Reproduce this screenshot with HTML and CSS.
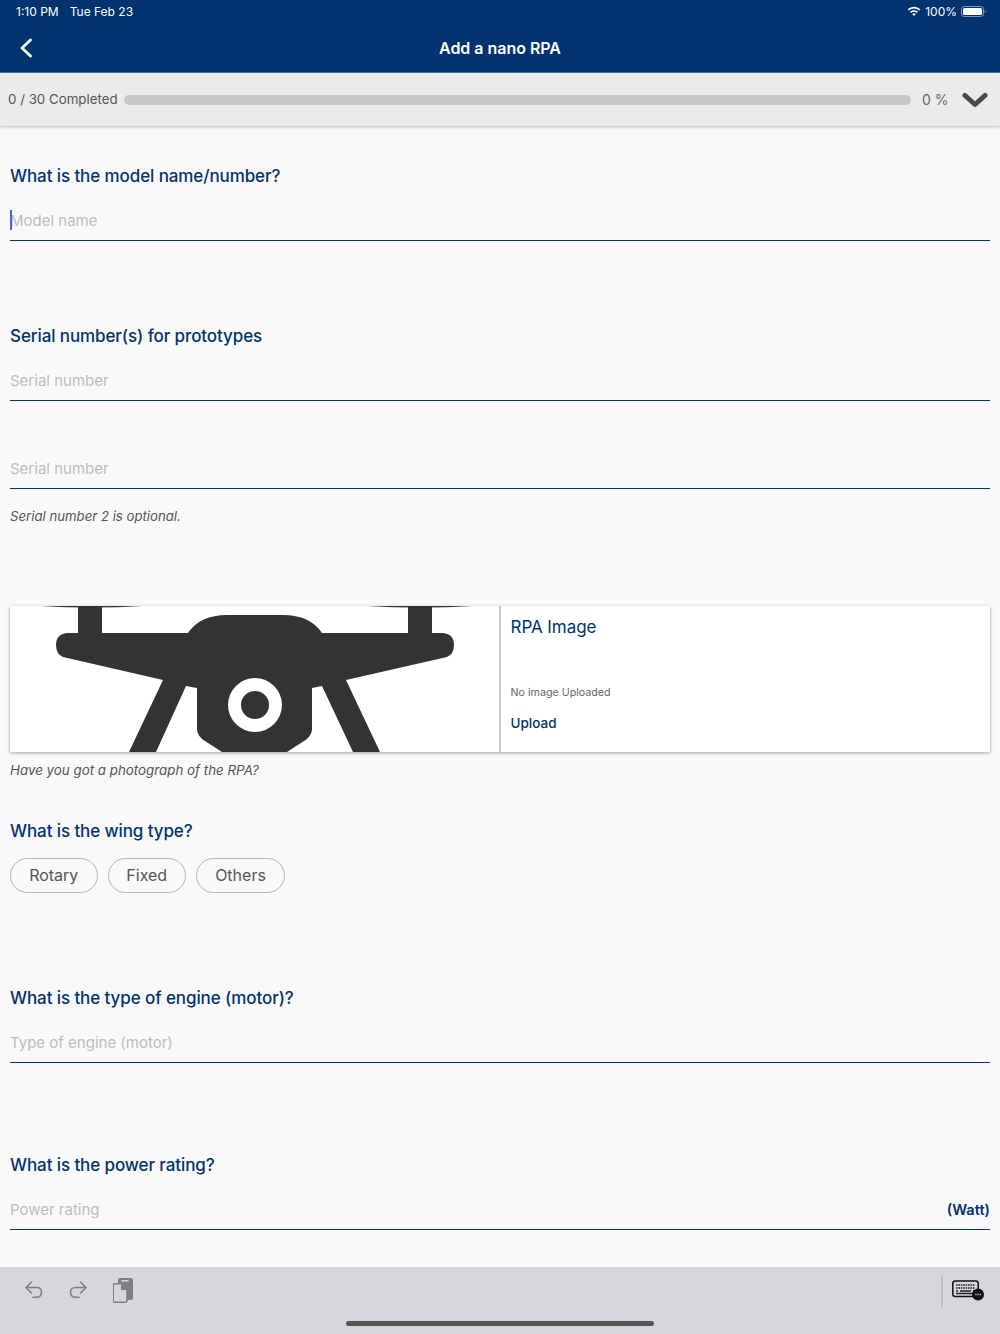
FILE: index.html
```html
<!DOCTYPE html>
<html lang="en">
<head>
<meta charset="utf-8">
<title>Add a nano RPA</title>
<link rel="stylesheet" href="styles.css">
</head>
<body>
<div class="app">
  <header class="header">
    <div class="status">
      <div class="status-left"><span>1:10 PM</span><span>Tue Feb 23</span></div>
      <div class="status-right">
        <svg class="wifi" viewBox="0 0 14 10" width="14" height="10"><path d="M.6 3.4C4.2 0 9.8 0 13.4 3.4l-1.1 1.2C9.3 1.8 4.7 1.8 1.7 4.6z" fill="#fff"/><path d="M2.9 5.7c2.3-2.1 5.900-2.100 8.200 0L10 6.900C8.300 5.400 5.700 5.400 4 6.900z" fill="#fff"/><path d="M5.200 8C6.200 7.100 7.800 7.100 8.800 8L7 9.900z" fill="#fff"/></svg>
        <span>100%</span>
        <svg class="battery" viewBox="0 0 25 11" width="25" height="11"><rect x=".5" y=".5" width="22" height="10" rx="2.800" fill="none" stroke="#7f9cc4"/><rect x="2" y="2" width="19" height="7" rx="1.500" fill="#fff"/><path d="M23.800 4v3c.6-.2 1-.8 1-1.500s-.4-1.300-1-1.500z" fill="#7f9cc4"/></svg>
      </div>
    </div>
    <div class="navbar">
      <svg class="back" viewBox="0 0 14 20" width="14" height="20"><path d="M11.500 2 3 10l8.500 8" fill="none" stroke="#fff" stroke-width="2.800" stroke-linecap="round" stroke-linejoin="round"/></svg>
      <h1 class="nav-title">Add a nano RPA</h1>
    </div>
  </header>

  <div class="progress">
    <span class="progress-label">0 / 30 Completed</span>
    <div class="progress-track"></div>
    <span class="progress-pct">0 %</span>
    <svg class="chevron" viewBox="0 0 26 16" width="26" height="16"><path d="M3 3.500 13 12.500 23 3.500" fill="none" stroke="#4a4a4a" stroke-width="5" stroke-linecap="round" stroke-linejoin="round"/></svg>
  </div>

  <main class="form">
    <h2 class="question q-first">What is the model name/number?</h2>
    <div class="field"><span class="caret"></span><span class="placeholder">Model name</span></div>

    <h2 class="question q-serial">Serial number(s) for prototypes</h2>
    <div class="field"><span class="placeholder">Serial number</span></div>
    <div class="field field-second"><span class="placeholder">Serial number</span></div>
    <p class="hint hint-serial">Serial number 2 is optional.</p>

    <section class="card">
      <div class="card-image">
        <svg class="drone" viewBox="10 606 489 146" width="489" height="146">
          <path d="M40 606H143Q92 609 40 606zM367 606H473Q420 609 367 606z" fill="#333"/>
          <path fill="#333" fill-rule="evenodd" d="M78 606H102V633H188Q200 615 227 615H283Q310 615 322 633H408V606H432V633H443Q454 634 454 645Q454 654 447 657L346 680 380 752H353L322 686 312 688V730Q311 737 304 741L287 752H222L205 741Q198 737 197 730V688L186 686 156 752H129L163 680 63 657Q56 654 56 645Q56 634 67 633H78zM255 678A27 27 0 1 0 255 732 27 27 0 1 0 255 678zM255 691A14 14 0 1 1 255 719 14 14 0 1 1 255 691z"/>
        </svg>
      </div>
      <div class="card-info">
        <h3 class="card-title">RPA Image</h3>
        <p class="card-status">No image Uploaded</p>
        <span class="card-upload">Upload</span>
      </div>
    </section>
    <p class="hint hint-photo">Have you got a photograph of the RPA?</p>

    <h2 class="question q-wing">What is the wing type?</h2>
    <div class="pills">
      <span class="pill pill-rotary">Rotary</span>
      <span class="pill pill-fixed">Fixed</span>
      <span class="pill pill-others">Others</span>
    </div>

    <h2 class="question q-engine">What is the type of engine (motor)?</h2>
    <div class="field"><span class="placeholder">Type of engine (motor)</span></div>

    <h2 class="question q-power">What is the power rating?</h2>
    <div class="field field-unit"><span class="placeholder">Power rating</span><span class="unit">(Watt)</span></div>
  </main>

  <footer class="toolbar">
    <div class="tools">
      <svg class="tool" viewBox="0 0 22 22" width="22" height="22"><path d="M8.500 3 3 8.500 8.500 14M3.500 8.500h10c3 0 5 2 5 4.800s-2 5-5 5H10" fill="none" stroke="#7d7f84" stroke-width="1.600" stroke-linecap="round" stroke-linejoin="round"/></svg>
      <svg class="tool" viewBox="0 0 22 22" width="22" height="22"><path d="M13.500 3 19 8.500 13.500 14M18.500 8.500h-10c-3 0-5 2-5 4.800s2 5 5 5H12" fill="none" stroke="#7d7f84" stroke-width="1.600" stroke-linecap="round" stroke-linejoin="round"/></svg>
      <svg class="tool tool-paste" viewBox="0 0 20 25" width="20" height="25"><path d="M7 0h11c1 0 2 1 2 2v18c0 1-1 2-2 2h-4V11L8 5H5V2c0-1 1-2 2-2z" fill="#7d7f84"/><path d="M9 2.700h6" stroke="#d5d7dc" stroke-width="1.500" stroke-linecap="round"/><path d="M2 5.800h6.500l5.500 5.700v10.700c0 1-.7 2-1.800 2H2c-1 0-1.800-1-1.800-2V7.600C.2 6.600 1 5.800 2 5.800z" fill="#d5d7dc" stroke="#7d7f84" stroke-width="1.500"/><path d="M8 6v6h6z" fill="#7d7f84"/></svg>
    </div>
    <div class="kbd-area">
      <span class="kbd-divider"></span>
      <svg class="kbd" viewBox="0 0 32 22" width="32" height="22">
        <rect x=".8" y="1" width="25.400" height="15.500" rx="2.500" fill="none" stroke="#111" stroke-width="1.500"/>
        <path d="M4 5h19M4 8h19" stroke="#222" stroke-width="1.600" stroke-dasharray="1.600 .8"/>
        <path d="M4 11h2M8 11h11M21 11h2M4 13.600h17" stroke="#222" stroke-width="1.500"/>
        <circle cx="26" cy="14.500" r="6" fill="#111"/>
        <path d="M23.300 14.500h1.200M25.500 14.500h1.200M27.700 14.500h1.200" stroke="#ddd" stroke-width="1.300"/>
      </svg>
    </div>
    <span class="home-bar"></span>
  </footer>
</div>
</body>
</html>
```
FILE: styles.css
```css
* { box-sizing: border-box; }
html, body { margin: 0; padding: 0; height: 100%; }
body { font-family: Inter, "Liberation Sans", sans-serif; background: #f9f9f9; overflow: hidden; }
.app { display: flex; flex-direction: column; height: 1334px; }

.header { height: 73px; background: #003370; color: #fff; border-bottom: 1px solid #4c6f9b; flex: none; }
.status { height: 24px; padding: 0 14px 2px 16px; display: flex; justify-content: space-between; align-items: center; font-size: 12px; }
.status-left { display: flex; gap: 11px; }
.status-right { display: flex; align-items: center; gap: 4px; }
.navbar { height: 48px; position: relative; display: flex; align-items: center; justify-content: center; }
.back { position: absolute; left: 19px; top: 14px; }
.nav-title { margin: 0; font-size: 16px; font-weight: 600; line-height: 48px; letter-spacing: -.02px; }

.progress { height: 53px; background: #ebebeb; display: flex; align-items: center; padding: 0 12px 0 8px; flex: none; box-shadow: 0 1px 3px rgba(0,0,0,.25); position: relative; }
.progress-label { font-size: 13.300px; color: #555; width: 116px; white-space: nowrap; margin-bottom: 2px; }
.progress-track { width: 787px; height: 10px; border-radius: 5px; background: #c7c7c7; }
.progress-pct { font-size: 14px; color: #666; margin-left: 11px; width: 40px; white-space: nowrap; }
.chevron { flex: none; }

.form { flex: 1; padding: 0 10px; overflow: hidden; }
.question { margin: 0; font-size: 17px; line-height: 24px; font-weight: 500; color: #003370; letter-spacing: -.1px; }
.q-first { margin-top: 38px; }
.q-serial { margin-top: 83px; }
.q-wing { margin-top: 39px; }
.q-engine { margin-top: 93px; }
.q-power { margin-top: 90px; }
.field { height: 41px; margin-top: 12px; padding-top: 2px; border-bottom: 1px solid #003370; display: flex; align-items: center; justify-content: space-between; position: relative; }
.field-second { margin-top: 47px; }
.placeholder { font-size: 15px; color: #bcbcbc; line-height: 38px; }
.caret { position: absolute; left: 0; top: 10px; width: 2px; height: 20px; background: #4a63d8; }
.unit { font-size: 14.600px; font-weight: 600; color: #003370; }
.hint { margin: 0; font-size: 13.200px; line-height: 20px; font-style: italic; color: #555; }
.hint-serial { margin-top: 17px; }
.hint-photo { margin-top: 8px; font-size: 13.350px; }

.card { margin-top: 80px; height: 146px; display: flex; background: #fff; box-shadow: 0 1px 3px rgba(0,0,0,.35); }
.card-image { width: 491px; flex: none; border-right: 2px solid #ccc; overflow: hidden; }
.drone { display: block; }
.card-info { flex: 1; padding: 10px 10px 10px 9.500px; display: flex; flex-direction: column; }
.card-title { margin: 0; font-size: 17px; line-height: 22px; font-weight: 400; color: #003370; letter-spacing: -.05px; }
.card-status { margin: 47px 0 0; font-size: 10.700px; line-height: 16px; color: #666; }
.card-upload { margin-top: 13px; font-size: 13.500px; line-height: 18px; font-weight: 500; color: #003370; }

.pills { display: flex; gap: 10.500px; margin-top: 15px; }
.pill { height: 35px; padding-bottom: 1px; border: 1px solid #b5b5b5; border-radius: 18px; font-size: 16px; color: #555; display: flex; align-items: center; justify-content: center; }
.pill-rotary { width: 87.500px; }
.pill-fixed { width: 77.500px; }
.pill-others { width: 89px; }

.toolbar { height: 67px; background: #d5d7dc; flex: none; display: flex; justify-content: space-between; align-items: flex-start; position: relative; padding: 0 16px 0 23px; }
.tools { display: flex; align-items: center; gap: 22px; height: 46px; }
.tool-paste { margin-left: 2px; }
.kbd-area { display: flex; align-items: flex-start; gap: 9px; padding-top: 8px; }
.kbd-divider { width: 2px; height: 32px; background: #bfc1c6; }
.kbd { margin-top: 5px; }
.home-bar { position: absolute; left: 346px; bottom: 8px; width: 308px; height: 5px; border-radius: 3px; background: #555; }
```
